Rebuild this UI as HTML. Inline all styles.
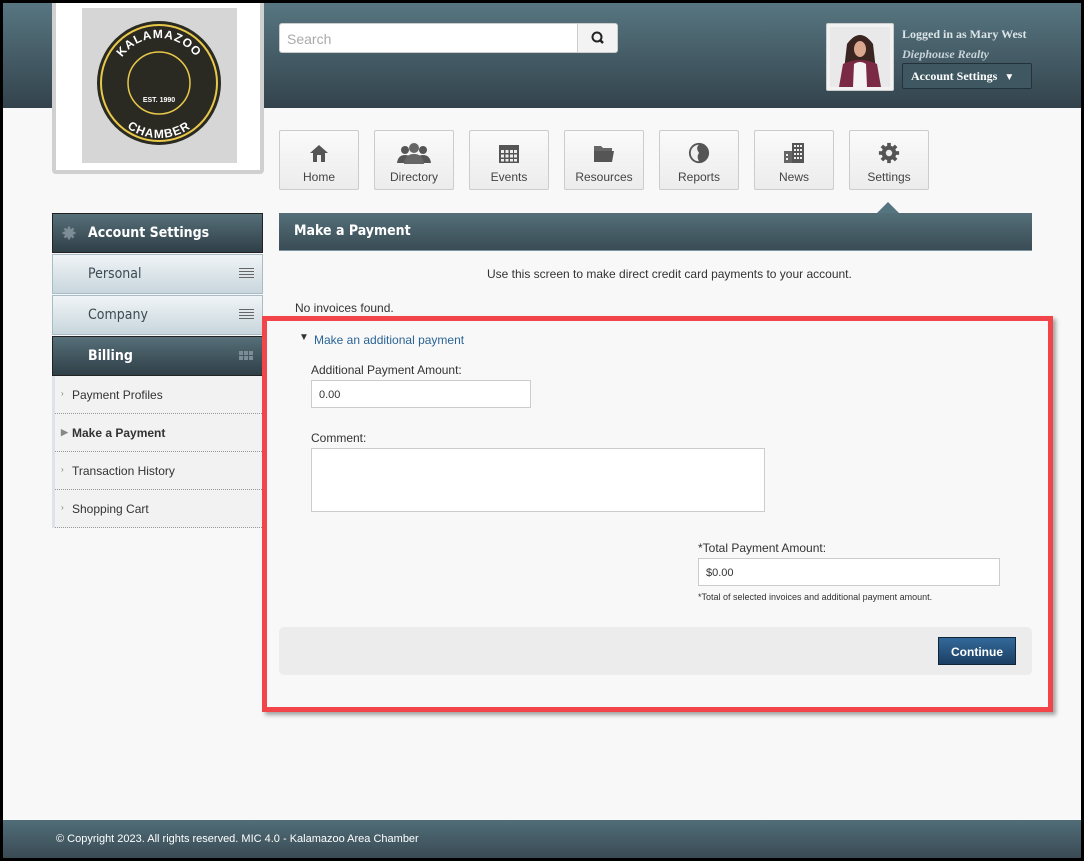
<!DOCTYPE html>
<html><head><meta charset="utf-8"><style>
*{box-sizing:border-box;margin:0;padding:0}
body{width:1084px;height:861px;background:#000;font-family:"Liberation Sans",Arial,sans-serif;position:relative;overflow:hidden;font-size:12px;color:#333}
#pg{position:absolute;left:3px;top:3px;width:1078px;height:855px;background:#f8f8f8;overflow:hidden}
.hdr{position:absolute;left:0;top:0;width:1078px;height:105px;background:linear-gradient(#577681,#33434c)}
.logo{position:absolute;left:49px;top:0;width:212px;height:171px;background:#fff;border:4px solid #d0d0d0;border-top:none;border-radius:0 0 4px 4px}
.logo .g{position:absolute;left:26px;top:5px;width:155px;height:155px;background:#d6d6d6}
.search{position:absolute;left:276px;top:20px;width:339px;height:30px;background:#fff;border:1px solid #ccc;border-radius:3px}
.search span{position:absolute;left:7px;top:7px;color:#aaa;font-size:14px}
.search .b{position:absolute;right:0;top:0;width:40px;height:28px;border-left:1px solid #ccc;background:#f3f3f3;border-radius:0 3px 3px 0}
.av{position:absolute;left:823px;top:20px;width:68px;height:68px;background:#f2f2f2;border:1px solid #ccc;border-radius:2px}
.user{position:absolute;left:899px;top:24px;color:#dce4e8;font-family:"Liberation Serif",serif;font-weight:bold;font-size:12px;white-space:nowrap}
.user i{display:block;margin-top:5px;color:#c7d3d9}
.acc{position:absolute;left:899px;top:60px;width:130px;height:26px;border:1px solid #22313a;background:#3f5761;border-radius:2px;color:#fff;font-family:"Liberation Serif",serif;font-weight:bold;font-size:12px;padding:5px 0 0 8px;white-space:nowrap}
.nav{position:absolute;top:127px;width:80px;height:60px;background:linear-gradient(#fafafa,#ececec);border:1px solid #ccc;border-radius:2px;text-align:center;font-size:12px;color:#444}
.nav svg{display:block;margin:11px auto 6px;height:22px}
.tb{position:absolute;left:276px;top:210px;width:753px;height:38px;background:linear-gradient(#546f79,#3a4c55);color:#fff;font-family:"DejaVu Sans Condensed","DejaVu Sans",sans-serif;font-size:14px;font-weight:bold;padding:10px 15px;border-bottom:1px solid #7c97a4}
.tri{position:absolute;left:874px;top:199px;width:0;height:0;border-left:11px solid transparent;border-right:11px solid transparent;border-bottom:11px solid #557580}
.sb{position:absolute;left:49px;width:211px;height:40px;font-family:"DejaVu Sans Condensed","DejaVu Sans",sans-serif;font-size:14px;padding:11px 0 0 35px}
.dk{background:linear-gradient(#566f79,#2f3f47);color:#fff;border:1px solid #222;font-weight:bold}
.lt{background:linear-gradient(#f0f4f6,#c8d6dd);color:#3c4a53;border:1px solid #a9bcc6}
.sub{position:absolute;left:52px;width:207px;height:38px;border-bottom:1px dotted #999;font-size:12px;padding:12px 0 0 17px;background:#f2f2f2;color:#333}
.red{position:absolute;left:259px;top:313px;width:791px;height:396px;border:5px solid #f2454a;box-shadow:3px 3px 4px rgba(0,0,0,.35)}
.inp{position:absolute;background:#fff;border:1px solid #ccc}
.foot{position:absolute;left:0;top:817px;width:1078px;height:38px;background:linear-gradient(#506d78,#3a4b54);color:#fff;font-size:11px;padding:13px 0 0 53px}
.ham{position:absolute;right:8px;top:13px;width:15px;height:10px;border-top:1px solid #666;border-bottom:1px solid #666}
.ham:before,.ham:after{content:"";position:absolute;left:0;width:15px;height:1px;background:#666}
.ham:before{top:2px}.ham:after{top:5px}
</style></head><body><div id="pg">
<div class="hdr"></div>
<div class="logo"><div class="g"><svg width="155" height="155" viewBox="0 0 155 155"><defs><path id="ta" d="M32 75 A45 45 0 0 1 122 75"/><path id="tb" d="M22 75 A55 55 0 0 0 132 75"/></defs><circle cx="77" cy="75" r="62" fill="#2a2a22"/><circle cx="77" cy="75" r="58" fill="none" stroke="#e8c84a" stroke-width="2"/><circle cx="77" cy="75" r="31" fill="none" stroke="#e8c84a" stroke-width="1.5"/><text fill="#fff" font-size="12" font-weight="bold" font-family="Liberation Sans" letter-spacing="1"><textPath href="#ta" startOffset="50%" text-anchor="middle">KALAMAZOO</textPath></text><text fill="#fff" font-size="12" font-weight="bold" font-family="Liberation Sans" letter-spacing="1"><textPath href="#tb" startOffset="50%" text-anchor="middle">CHAMBER</textPath></text><text x="77" y="94" fill="#fff" font-size="7" font-weight="bold" text-anchor="middle" font-family="Liberation Sans">EST. 1990</text></svg></div></div>
<div class="search"><span>Search</span><div class="b"><svg width="40" height="28"><circle cx="19" cy="13" r="4.5" fill="none" stroke="#222" stroke-width="2"/><line x1="22" y1="16" x2="25" y2="19" stroke="#222" stroke-width="2.5"/></svg></div></div>
<div class="av"><svg width="66" height="66"><rect x="3" y="3" width="60" height="60" fill="#e9e9e9"/><path d="M20 20 Q33 2 46 20 L50 55 L16 55Z" fill="#3a2520"/><path d="M12 63 L16 40 Q33 32 50 40 L54 63Z" fill="#7a2a45"/><path d="M26 63 L27 40 Q33 36 39 40 L40 63Z" fill="#f4f4f4"/><ellipse cx="33" cy="25" rx="6" ry="8" fill="#d9a88e"/></svg></div>
<div class="user">Logged in as Mary West<i>Diephouse Realty</i></div>
<div class="acc">Account Settings <span style="font-size:10px;margin-left:4px">▼</span></div>

<div class="nav" style="left:276px"><svg width="22" height="22" viewBox="0 0 22 22"><path d="M2 11 L11 3 L20 11 L17 11 L17 20 L5 20 L5 11Z" fill="#555"/><rect x="9" y="13" width="4" height="7" fill="#eee"/></svg>Home</div>
<div class="nav" style="left:371px"><svg width="36" height="22" viewBox="0 0 36 22"><circle cx="9" cy="8" r="4" fill="#555"/><circle cx="27" cy="8" r="4" fill="#555"/><path d="M1 21 Q2 13 9 13 Q16 13 17 21Z M19 21 Q20 13 27 13 Q34 13 35 21Z" fill="#555"/><circle cx="18" cy="6" r="5" fill="#666"/><path d="M8 22 Q9 12 18 12 Q27 12 28 22Z" fill="#666"/></svg>Directory</div>
<div class="nav" style="left:466px"><svg width="22" height="22" viewBox="0 0 22 22"><rect x="1" y="3" width="20" height="18" fill="#555"/><g fill="#eee"><rect x="3" y="8" width="3" height="3"/><rect x="7.5" y="8" width="3" height="3"/><rect x="12" y="8" width="3" height="3"/><rect x="16" y="8" width="3" height="3"/><rect x="3" y="12.5" width="3" height="3"/><rect x="7.5" y="12.5" width="3" height="3"/><rect x="12" y="12.5" width="3" height="3"/><rect x="16" y="12.5" width="3" height="3"/><rect x="3" y="17" width="3" height="2.5"/><rect x="7.5" y="17" width="3" height="2.5"/><rect x="12" y="17" width="3" height="2.5"/><rect x="16" y="17" width="3" height="2.5"/></g></svg>Events</div>
<div class="nav" style="left:561px"><svg width="24" height="22" viewBox="0 0 24 22"><path d="M2 4 L9 4 L11 6 L20 6 L20 9 L2 9Z" fill="#666"/><path d="M2 9 L22 9 L20 20 L2 20Z" fill="#555"/></svg>Resources</div>
<div class="nav" style="left:656px"><svg width="24" height="22" viewBox="0 0 24 24"><circle cx="12" cy="12" r="11" fill="#555"/><path d="M12 3 A9 9 0 0 1 12 21 Q15 16 12 12 Q16 6 12 3Z" fill="#eee" transform="translate(24,0) scale(-1,1)"/></svg>Reports</div>
<div class="nav" style="left:751px"><svg width="24" height="22" viewBox="0 0 24 22"><rect x="10" y="1" width="12" height="20" fill="#555"/><rect x="2" y="9" width="8" height="12" fill="#666"/><g fill="#eee"><rect x="12" y="3" width="2" height="2"/><rect x="15" y="3" width="2" height="2"/><rect x="18" y="3" width="2" height="2"/><rect x="12" y="7" width="2" height="2"/><rect x="15" y="7" width="2" height="2"/><rect x="18" y="7" width="2" height="2"/><rect x="12" y="11" width="2" height="2"/><rect x="15" y="11" width="2" height="2"/><rect x="18" y="11" width="2" height="2"/><rect x="12" y="15" width="2" height="2"/><rect x="15" y="15" width="2" height="2"/><rect x="18" y="15" width="2" height="2"/><rect x="4" y="12" width="2" height="2"/><rect x="4" y="16" width="2" height="2"/></g></svg>News</div>
<div class="nav" style="left:846px"><svg width="24" height="22" viewBox="0 0 24 24"><g fill="#555"><circle cx="12" cy="12" r="8"/><rect x="10" y="1" width="4" height="22"/><rect x="1" y="10" width="22" height="4"/><rect x="10" y="1" width="4" height="22" transform="rotate(45 12 12)"/><rect x="10" y="1" width="4" height="22" transform="rotate(-45 12 12)"/></g><circle cx="12" cy="12" r="3.5" fill="#eee"/></svg>Settings</div>
<div class="tri"></div>
<div class="tb">Make a Payment</div>

<div class="sb dk" style="top:210px"><svg style="position:absolute;left:9px;top:12px" width="14" height="14" viewBox="0 0 24 24"><g fill="#7d8d95"><circle cx="12" cy="12" r="8"/><rect x="10" y="1" width="4" height="22"/><rect x="1" y="10" width="22" height="4"/><rect x="10" y="1" width="4" height="22" transform="rotate(45 12 12)"/><rect x="10" y="1" width="4" height="22" transform="rotate(-45 12 12)"/></g></svg>Account Settings</div>
<div class="sb lt" style="top:251px">Personal<span class="ham"></span></div>
<div class="sb lt" style="top:292px">Company<span class="ham"></span></div>
<div class="sb dk" style="top:333px">Billing<svg style="position:absolute;right:9px;top:14px" width="14" height="9"><g fill="#7d8d95"><rect x="0" y="0" width="4" height="4"/><rect x="5" y="0" width="4" height="4"/><rect x="10" y="0" width="4" height="4"/><rect x="0" y="5" width="4" height="4"/><rect x="5" y="5" width="4" height="4"/><rect x="10" y="5" width="4" height="4"/></g></svg></div>
<div class="sub" style="top:373px"><span style="position:absolute;left:6px;top:13px;font-size:8px;color:#777">›</span>Payment Profiles</div>
<div class="sub" style="top:411px;font-weight:bold;color:#333"><span style="position:absolute;left:6px;top:13px;font-size:9px;color:#888">▶</span>Make a Payment</div>
<div class="sub" style="top:449px"><span style="position:absolute;left:6px;top:13px;font-size:8px;color:#777">›</span>Transaction History</div>
<div class="sub" style="top:487px"><span style="position:absolute;left:6px;top:13px;font-size:8px;color:#777">›</span>Shopping Cart</div>
<div style="position:absolute;left:49px;top:373px;width:3px;height:152px;background:#dde3e6"></div>

<div style="position:absolute;left:484px;top:264px;font-size:12px">Use this screen to make direct credit card payments to your account.</div>
<div style="position:absolute;left:292px;top:298px">No invoices found.</div>
<div class="red"></div>
<div style="position:absolute;left:296px;top:329px;font-size:10px">▼</div>
<div style="position:absolute;left:311px;top:330px;color:#2a6496">Make an additional payment</div>
<div style="position:absolute;left:308px;top:360px">Additional Payment Amount:</div>
<div class="inp" style="left:308px;top:377px;width:220px;height:28px;padding:8px 7px;font-size:11px">0.00</div>
<div style="position:absolute;left:308px;top:428px">Comment:</div>
<div class="inp" style="left:308px;top:445px;width:454px;height:64px"></div>
<div style="position:absolute;left:695px;top:538px">*Total Payment Amount:</div>
<div class="inp" style="left:695px;top:555px;width:302px;height:28px;padding:8px 7px;font-size:11px">$0.00</div>
<div style="position:absolute;left:695px;top:589px;font-size:9px">*Total of selected invoices and additional payment amount.</div>
<div style="position:absolute;left:276px;top:624px;width:753px;height:48px;background:#ececec;border-radius:5px"></div>
<div style="position:absolute;left:935px;top:634px;width:78px;height:28px;background:linear-gradient(#33699a,#1c3f63);border:1px solid #0f2538;color:#fff;font-weight:bold;font-size:12px;text-align:center;padding-top:7px">Continue</div>
<div class="foot">© Copyright 2023. All rights reserved. MIC 4.0 - Kalamazoo Area Chamber</div>
</div></body></html>
